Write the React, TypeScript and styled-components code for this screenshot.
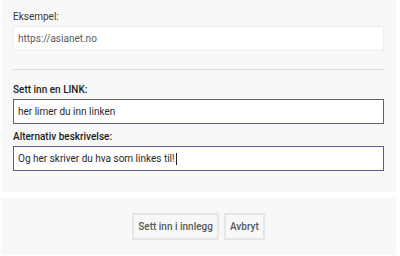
import React from "react";
import styled, { createGlobalStyle } from "styled-components";

const GlobalStyle = createGlobalStyle`
  html, body {
    margin: 0;
    padding: 0;
    background: #ffffff;
    font-family: Roboto, "Liberation Sans", Arial, sans-serif;
  }
`;

const Page = styled.div`
  width: 395px;
  margin-left: 1px;
  display: flex;
  flex-direction: column;
  gap: 5px;
`;

const FormPanel = styled.div`
  background: #f8f8f8;
  padding: 11px 12px 21px 12px;
  display: flex;
  flex-direction: column;
`;

const Group = styled.div<{ $top?: number }>`
  display: flex;
  flex-direction: column;
  margin-top: ${(p) => p.$top ?? 0}px;
`;

const Label = styled.label<{ $strong?: boolean }>`
  display: block;
  font-size: 10px;
  line-height: 12px;
  margin-bottom: 3px;
  color: ${(p) => (p.$strong ? "#1c1c1c" : "#3a3a3a")};
  font-weight: ${(p) => (p.$strong ? 500 : 400)};
`;

const Field = styled.div<{ $active?: boolean }>`
  box-sizing: border-box;
  height: 25px;
  width: 371px;
  padding: 0 4px;
  display: flex;
  align-items: center;
  background: #ffffff;
  border: 1px solid ${(p) => (p.$active ? "#5f5d90" : "#ececec")};
  font-size: 10px;
  color: ${(p) => (p.$active ? "#2a2a2a" : "#5a5a5a")};
  white-space: nowrap;
`;

const Caret = styled.span`
  display: inline-block;
  width: 1px;
  height: 12px;
  background: #222;
  margin-left: 1px;
`;

const Divider = styled.hr`
  width: 371px;
  margin: 18px 0 14px 0;
  border: none;
  border-top: 1px solid #dddddd;
`;

const ActionPanel = styled.div`
  background: #f8f8f8;
  height: 58px;
  display: flex;
  align-items: center;
  justify-content: center;
  gap: 5px;
`;

const Button = styled.button`
  box-sizing: border-box;
  height: 27px;
  padding: 0 4px;
  background: #f8f8f8;
  border: 2px solid #e6e6e6;
  font-family: Roboto, "Liberation Sans", Arial, sans-serif;
  font-size: 10px;
  font-weight: 500;
  color: #595959;
  cursor: pointer;
`;

export default function App() {
  return (
    <>
      <GlobalStyle />
      <Page>
        <FormPanel>
          <Group>
            <Label>Eksempel:</Label>
            <Field>https://asianet.no</Field>
          </Group>
          <Divider />
          <Group>
            <Label $strong>Sett inn en LINK:</Label>
            <Field $active>her limer du inn linken</Field>
          </Group>
          <Group $top={7}>
            <Label $strong>Alternativ beskrivelse:</Label>
            <Field $active>
              Og her skriver du hva som linkes til!
              <Caret />
            </Field>
          </Group>
        </FormPanel>
        <ActionPanel>
          <Button>Sett inn i innlegg</Button>
          <Button>Avbryt</Button>
        </ActionPanel>
      </Page>
    </>
  );
}
